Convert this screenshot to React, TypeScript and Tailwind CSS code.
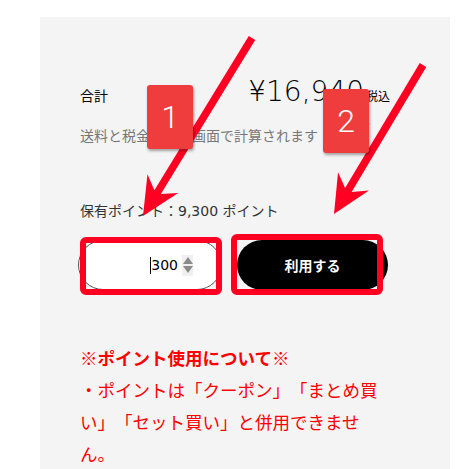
import React from "react";

type Pt = [number, number];

// arrow polygon from tail to tip, with barbed head
function arrowPoints(tail: Pt, tip: Pt, shaft = 3.8, head = 38, barb = 18, notch = 10): string {
  const dx = tip[0] - tail[0];
  const dy = tip[1] - tail[1];
  const len = Math.hypot(dx, dy);
  const ux = dx / len;
  const uy = dy / len;
  const nx = -uy;
  const ny = ux;
  const at = (back: number, side: number): Pt => [tip[0] - ux * back + nx * side, tip[1] - uy * back + ny * side];
  const pts: Pt[] = [
    [tail[0] + nx * shaft, tail[1] + ny * shaft],
    at(head - notch, shaft),
    at(head, barb),
    tip,
    at(head, -barb),
    at(head - notch, -shaft),
    [tail[0] - nx * shaft, tail[1] - ny * shaft],
  ];
  return pts.map((p) => p.join(",")).join(" ");
}

const FONT = "font-['DejaVu_Sans','Noto_Sans_CJK_JP',sans-serif]";
const JP = "font-['Noto_Sans_CJK_JP',sans-serif]";

export default function App() {
  return (
    <div className={`relative w-[470px] h-[469px] overflow-hidden bg-white ${FONT}`}>
      <div className="ml-[40px] mt-[17px] w-[410px] h-[470px] bg-[#f4f4f4] pl-[40px] pr-[60px] pt-[55px]">
        <div className="flex items-baseline justify-between h-[40px]">
          <span className={`text-[14px] text-black ${JP}`}>合計</span>
          <span className="flex items-baseline">
            <span className="text-[28px] text-black leading-[40px] font-extralight">¥16,940</span>
            <span className={`text-[12px] text-black ml-[2px] ${JP}`}>税込</span>
          </span>
        </div>
        <p className={`mt-[13px] text-[14px] leading-[20px] text-[#777] ${JP}`}>
          送料と税金は次の画面で計算されます
        </p>
        <p className="mt-[56px] text-[14px] leading-[20px] text-[#333]">
          保有ポイント：9,300 ポイント
        </p>
        <div className="mt-[19px] flex gap-[15px] -ml-[2px]">
          <div className="w-[144px] h-[50px] rounded-full border border-[#555] bg-white flex items-center justify-end pr-[28px]">
            <span className="w-px h-[17px] bg-black" />
            <span className="text-[14px] text-black leading-none">300</span>
            <span className="ml-[4px] w-[11px] h-[21px] bg-[#f0f0f0] flex flex-col items-center justify-center gap-[2px]">
              <span className="w-0 h-0 border-l-[5px] border-r-[5px] border-b-[7px] border-l-transparent border-r-transparent border-b-[#8a8a8a]" />
              <span className="w-0 h-0 border-l-[5px] border-r-[5px] border-t-[7px] border-l-transparent border-r-transparent border-t-[#8a8a8a]" />
            </span>
          </div>
          <button className={`w-[151px] h-[50px] rounded-full bg-black text-white text-[14px] font-bold ${JP}`}>
            利用する
          </button>
        </div>
        <div className={`mt-[52px] w-[310px] text-[#ff0000] text-[17.5px] leading-[32px] [text-spacing-trim:space-all] ${JP}`}>
          <p>
            ※<span className="font-bold">ポイント使用について</span>※
          </p>
          <p>・ポイントは「クーポン」「まとめ買い」「セット買い」と併用できません。</p>
        </div>
      </div>

      {/* annotation overlay */}
      <svg className="absolute inset-0 pointer-events-none" width="470" height="469" viewBox="0 0 470 469">
        <polygon points={arrowPoints([252, 38], [143, 216])} fill="#ff0022" />
        <polygon points={arrowPoints([423, 65], [334, 214])} fill="#ff0022" />
        <rect x="83" y="240" width="136" height="52" rx="3" fill="none" stroke="#ff0022" strokeWidth="6" />
        <rect x="234" y="237" width="146" height="55" rx="3" fill="none" stroke="#ff0022" strokeWidth="6" />
      </svg>
      <div className="absolute left-[147px] top-[85px] w-[46px] h-[64px] rounded-[3px] bg-[#ef3d3d] shadow-[1px_2px_3px_rgba(0,0,0,0.35)] flex items-center justify-center text-white text-[32px] font-['Roboto',sans-serif] font-light">
        1
      </div>
      <div className="absolute left-[323px] top-[89px] w-[46px] h-[64px] rounded-[3px] bg-[#ef3d3d] shadow-[1px_2px_3px_rgba(0,0,0,0.35)] flex items-center justify-center text-white text-[32px] font-['Roboto',sans-serif] font-light">
        2
      </div>
    </div>
  );
}
